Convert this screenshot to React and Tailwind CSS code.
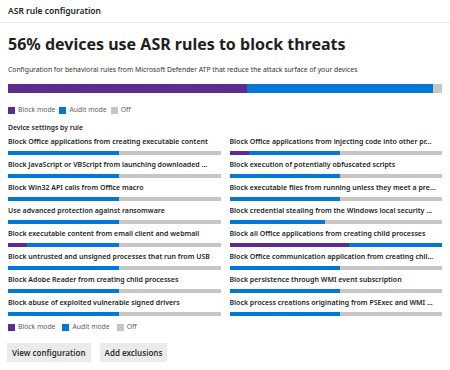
const rules = [
  { name: 'Block Office applications from creating executable content', block: 0, audit: 52 },
  { name: 'Block Office applications from injecting code into other pr...', block: 9, audit: 43 },
  { name: 'Block JavaScript or VBScript from launching downloaded ...', block: 0, audit: 52 },
  { name: 'Block execution of potentially obfuscated scripts', block: 0, audit: 52 },
  { name: 'Block Win32 API calls from Office macro', block: 0, audit: 52 },
  { name: 'Block executable files from running unless they meet a pre...', block: 0, audit: 52 },
  { name: 'Use advanced protection against ransomware', block: 0, audit: 52 },
  { name: 'Block credential stealing from the Windows local security ...', block: 0, audit: 45 },
  { name: 'Block executable content from email client and webmail', block: 9, audit: 43 },
  { name: 'Block all Office applications from creating child processes', block: 56, audit: 44 },
  { name: 'Block untrusted and unsigned processes that run from USB', block: 0, audit: 52 },
  { name: 'Block Office communication application from creating chil...', block: 0, audit: 52 },
  { name: 'Block Adobe Reader from creating child processes', block: 0, audit: 52 },
  { name: 'Block persistence through WMI event subscription', block: 0, audit: 52 },
  { name: 'Block abuse of exploited vulnerable signed drivers', block: 0, audit: 52 },
  { name: 'Block process creations originating from PSExec and WMI ...', block: 0, audit: 52 },
];

const Legend = ({ wide }) => (
  <div className={`flex items-center text-[6.8px] text-[#605e5c] ${wide ? 'gap-[7px]' : 'gap-[4px]'}`}>
    <span className="flex items-center gap-[3px]">
      <span className="w-[7px] h-[7px] bg-[#5c2d91]" />
      Block mode
    </span>
    <span className="flex items-center gap-[3px]">
      <span className="w-[7px] h-[7px] bg-[#0078d4]" />
      Audit mode
    </span>
    <span className="flex items-center gap-[3px]">
      <span className="w-[7px] h-[7px] bg-[#c8c6c4]" />
      Off
    </span>
  </div>
);

const Bar = ({ block, audit, height }) => (
  <div className={`flex w-full bg-[#c8c6c4] ${height}`}>
    <div className="bg-[#5c2d91]" style={{ width: `${block}%` }} />
    <div className="bg-[#0078d4]" style={{ width: `${audit}%` }} />
  </div>
);

export default function App() {
  return (
    <div className="w-[450px] h-[370px] bg-white text-[#201f1e] overflow-hidden" style={{ fontFamily: '"Noto Sans", "Open Sans", sans-serif' }}>
      <div className="h-[23px] px-2 flex items-center border-b border-[#edebe9] text-[8.5px] font-semibold">
        ASR rule configuration
      </div>

      <div className="px-2">
        <h1 className="mt-[10px] text-[16px] leading-[22px] font-bold">56% devices use ASR rules to block threats</h1>
        <p className="mt-[10px] text-[6.8px] leading-[10px] text-[#323130]">
          Configuration for behavioral rules from Microsoft Defender ATP that reduce the attack surface of your devices
        </p>

        <div className="mt-[9px]">
          <Bar block={55} audit={43} height="h-[9px]" />
        </div>

        <div className="mt-[12px]">
          <Legend />
        </div>

        <div className="mt-[7px] text-[6.8px] leading-[12px] font-semibold">Device settings by rule</div>

        <div className="mt-[2px] grid grid-cols-2 gap-x-[9px]">
          {rules.map((r) => (
            <div key={r.name} className="h-[23px]">
              <div className="text-[7px] leading-[12px] font-semibold whitespace-nowrap overflow-hidden">{r.name}</div>
              <div className="mt-[3px]">
                <Bar block={r.block} audit={r.audit} height="h-[4px]" />
              </div>
            </div>
          ))}
        </div>

        <div className="mt-[2px]">
          <Legend wide />
        </div>

        <div className="mt-[11px] flex gap-[9px] -ml-px">
          <button className="h-[19px] px-[5px] bg-[#ebebeb] text-[8px] font-semibold text-[#323130]">View configuration</button>
          <button className="h-[19px] px-[5px] bg-[#ebebeb] text-[8px] font-semibold text-[#323130]">Add exclusions</button>
        </div>
      </div>
    </div>
  );
}
